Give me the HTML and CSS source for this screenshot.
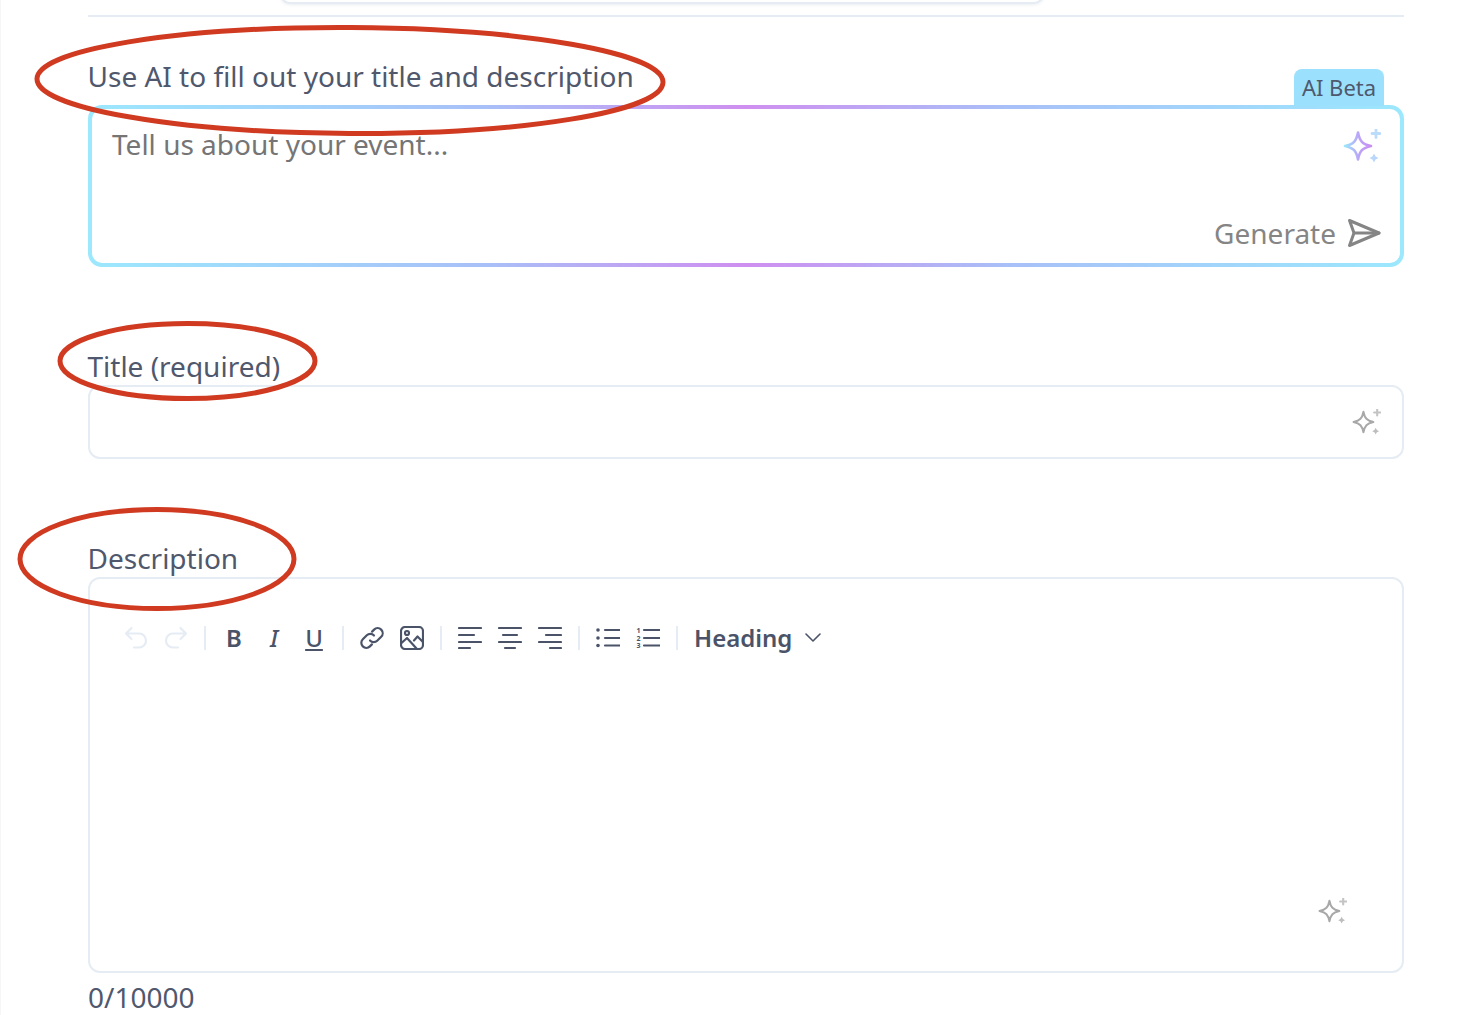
FILE: index.html
```html
<!DOCTYPE html>
<html lang="en">
<head>
<meta charset="utf-8">
<title>Event details</title>
<link rel="stylesheet" href="styles.css">
</head>
<body>
<svg width="0" height="0" class="defs">
  <defs>
    <linearGradient id="spark" x1="0" y1="0" x2="1" y2="0">
      <stop offset="0" stop-color="#9be6fb"/>
      <stop offset="0.5" stop-color="#b9a6f8"/>
      <stop offset="1" stop-color="#c98ef3"/>
    </linearGradient>
    <symbol id="sparkles" viewBox="0 0 38 36">
      <path d="M15 3.500c1.800 8.800 4.300 11.500 13 13.500-8.700 2-11.200 4.700-13 13.500C13.200 21.700 10.700 19 2 17c8.700-2 11.200-4.700 13-13.500z" fill="none" stroke-width="2.600" stroke-linejoin="round"/>
      <path class="spark-small" d="M33 0.500v8M29 4.500h8" fill="none" stroke-width="2.800" stroke-linecap="round"/>
      <path class="spark-fill" d="M31 24.500l1.600 2.900 2.900 1.600-2.900 1.600-1.600 2.900-1.600-2.900-2.900-1.600 2.900-1.600z"/>
    </symbol>
  </defs>
</svg>

<div class="popup-edge"></div>

<main class="page">
  <hr class="divider">

  <section class="ai-field">
    <div class="ai-head">
      <label class="label">Use AI to fill out your title and description</label>
      <span class="beta">AI Beta</span>
    </div>
    <div class="ai-box">
      <div class="ai-inner">
        <div class="placeholder">Tell us about your event...</div>
        <button class="generate" type="button">
          <span>Generate</span>
          <svg class="send" viewBox="0 0 34 30" fill="none" stroke="#858585" stroke-width="3" stroke-linejoin="round" stroke-linecap="round">
            <path d="M2.500 2.500L32 15 2.500 27.500 7 15z"/>
            <path d="M7 15h25"/>
          </svg>
        </button>
        <svg class="sparkle sparkle-ai"><use href="#sparkles"/></svg>
      </div>
    </div>
  </section>

  <section class="title-field">
    <label class="label">Title (required)</label>
    <div class="input">
      <svg class="sparkle sparkle-grey sparkle-title"><use href="#sparkles"/></svg>
    </div>
  </section>

  <section class="desc-field">
    <label class="label">Description</label>
    <div class="editor">
      <div class="toolbar">
        <svg class="ic ic-off" viewBox="0 0 24 24"><path d="M2 7.500h13a7 7 0 0 1 0 14h-5M2 7.500l5.500-5.500M2 7.500L7.500 13"/></svg>
        <svg class="ic ic-off" viewBox="0 0 24 24"><path d="M22 7.500H9a7 7 0 0 0 0 14h5M22 7.500L16.500 2M22 7.500L16.500 13"/></svg>
        <span class="sep"></span>
        <span class="glyph glyph-b">B</span>
        <span class="glyph glyph-i">I</span>
        <span class="glyph glyph-u">U</span>
        <span class="sep"></span>
        <svg class="ic" viewBox="0 0 24 24"><path d="M10 14.500a5 5 0 0 0 7.200.2l4-4a5 5 0 0 0-7.100-7.100l-2 2"/><path d="M14 9.500a5 5 0 0 0-7.200-.2l-4 4a5 5 0 0 0 7.100 7.100l2-2"/></svg>
        <svg class="ic" viewBox="0 0 24 24"><rect x="1" y="1" width="22" height="22" rx="4"/><circle cx="7" cy="7" r="2"/><path d="M1.500 17l5.500-5 9.500 10.500M14 14.500l3.500-4 5.500 5.500"/></svg>
        <span class="sep"></span>
        <svg class="ic ic-lines" viewBox="0 0 24 24"><path d="M1 2h22M1 9h15M1 16h22M1 22h11"/></svg>
        <svg class="ic ic-lines" viewBox="0 0 24 24"><path d="M1 2h22M5 9h14M1 16h22M7 22h10"/></svg>
        <svg class="ic ic-lines" viewBox="0 0 24 24"><path d="M1 2h22M8 9h15M1 16h22M12 22h11"/></svg>
        <span class="sep"></span>
        <svg class="ic" viewBox="0 0 24 24"><path d="M9 4h15M9 12h15M9 19.500h15"/><circle class="dot" cx="2" cy="4" r="1.800"/><circle class="dot" cx="2" cy="12" r="1.800"/><circle class="dot" cx="2" cy="19.500" r="1.800"/></svg>
        <svg class="ic" viewBox="0 0 24 24"><path d="M8 4h16M8 12h16M8 19.500h16"/><text class="num" x="0.500" y="6.500">1</text><text class="num" x="0.500" y="14.500">2</text><text class="num" x="0.500" y="22">3</text></svg>
        <span class="sep"></span>
        <button class="heading" type="button">
          <span>Heading</span>
          <svg class="chev" viewBox="0 0 16 10"><path d="M1 1l7 7 7-7"/></svg>
        </button>
      </div>
      <svg class="sparkle sparkle-grey sparkle-desc"><use href="#sparkles"/></svg>
    </div>
    <div class="count">0/10000</div>
  </section>
</main>

<svg class="marks" viewBox="0 0 1459 1015" fill="none" stroke="#cf3a20" stroke-width="5">
  <ellipse cx="350" cy="80.500" rx="313" ry="53" transform="rotate(0.300 350 80.500)"/>
  <ellipse cx="187.500" cy="361" rx="127.500" ry="37.500"/>
  <ellipse cx="157" cy="559" rx="137" ry="49.500"/>
</svg>
</body>
</html>
```

FILE: styles.css
```css
* { box-sizing: border-box; }

html, body { margin: 0; padding: 0; }

body {
  position: relative;
  width: 1459px;
  height: 1015px;
  overflow: hidden;
  background: #fff;
  box-shadow: inset 1px 0 0 #f6f6f6;
  font-family: "Noto Sans", "Liberation Sans", sans-serif;
  color: #4f586d;
}

.defs { position: absolute; }

.popup-edge {
  position: absolute;
  left: 280px;
  top: -20px;
  width: 764px;
  height: 24px;
  background: #fff;
  border: 2px solid #e6ecf3;
  border-radius: 10px;
  box-shadow: 0 1px 3px rgba(90, 110, 140, .12);
}

.page { padding: 15px 55px 0 88px; }

.divider {
  margin: 0;
  height: 2px;
  border: 0;
  background: #e6ecf3;
}

.label {
  display: block;
  margin-left: -0.5px;
  font-size: 28px;
  line-height: 38px;
  color: #4f586d;
}

.ai-field { margin-top: 40px; }

.ai-head {
  display: flex;
  justify-content: space-between;
  align-items: flex-end;
  height: 48px;
  padding-right: 20px;
}

.ai-head .label { align-self: flex-start; }

.beta {
  width: 90px;
  height: 37px;
  margin-bottom: -1px;
  background: #9be1fd;
  border-radius: 8px 8px 0 0;
  font-size: 22px;
  line-height: 36px;
  text-align: center;
  color: #4f586d;
}

.ai-box {
  height: 162px;
  padding: 4px;
  border-radius: 14px;
  background: linear-gradient(90deg, #9ce8fd 0%, #a8c0f8 30%, #cf8ff0 50%, #a8c0f8 70%, #9ce8fd 100%);
}

.ai-inner {
  position: relative;
  display: flex;
  flex-direction: column;
  justify-content: space-between;
  height: 100%;
  padding: 16px 19px 11px 20px;
  background: #fff;
  border-radius: 10px;
}

.placeholder {
  font-size: 28px;
  line-height: 38px;
  color: #757575;
}

.generate {
  display: flex;
  align-items: center;
  gap: 11px;
  align-self: flex-end;
  padding: 0;
  border: 0;
  background: none;
  font: inherit;
  font-size: 28px;
  line-height: 38px;
  color: #858585;
}

.send { width: 34px; height: 30px; }

.sparkle {
  position: absolute;
  --small: #bcdcfb;
  --tiny: #b9d6fb;
}

.spark-fill { fill: var(--tiny); stroke: none; }

.spark-small { stroke: var(--small); }

.sparkle-ai {
  top: 20px;
  right: 19px;
  width: 38px;
  height: 36px;
  stroke: url(#spark);
  fill: none;
}

.sparkle-grey {
  width: 29px;
  height: 27.5px;
  stroke: #a8a8a8;
  --small: #c4c4c4;
  --tiny: #bdbdbd;
}

.sparkle-title { top: 22px; right: 21px; }

.sparkle-desc { bottom: 45.5px; right: 55.5px; }

.title-field { margin-top: 80px; }

.input {
  position: relative;
  height: 74px;
  border: 2px solid #e6ecf3;
  border-radius: 12px;
}

.desc-field { margin-top: 80px; }

.editor {
  position: relative;
  height: 396px;
  border: 2px solid #e6ecf3;
  border-radius: 12px;
  padding: 47px 0 0 34px;
}

.toolbar {
  display: flex;
  align-items: center;
  gap: 16px;
  height: 24px;
}

.ic {
  flex: none;
  width: 24px;
  height: 24px;
  fill: none;
  stroke: #4a5368;
  stroke-width: 2.200;
  stroke-linecap: round;
  stroke-linejoin: round;
}

.ic-off { stroke: #e6ecf3; }

.dot { fill: #4a5368; stroke: none; }

.num {
  fill: #4a5368;
  stroke: none;
  font-family: "Noto Sans", sans-serif;
  font-size: 7px;
  font-weight: 700;
}

.sep {
  flex: none;
  width: 2px;
  height: 24px;
  background: #e6ecf3;
}

.glyph {
  flex: none;
  width: 24px;
  height: 24px;
  font-size: 24px;
  line-height: 24px;
  text-align: center;
  color: #4a5368;
}

.glyph-b { font-weight: 600; }

.glyph-i { font-style: italic; font-weight: 500; }

.glyph-u {
  font-weight: 500;
  text-decoration: underline;
  text-decoration-thickness: 2px;
  text-underline-offset: 2px;
}

.heading {
  display: flex;
  align-items: center;
  gap: 13px;
  padding: 0 0 2px;
  border: 0;
  background: none;
  font: inherit;
  font-size: 24px;
  font-weight: 600;
  color: #4a5368;
}

.chev {
  width: 16px;
  height: 10px;
  margin-top: 2px;
  fill: none;
  stroke: #4a5368;
  stroke-width: 1.600;
  stroke-linecap: round;
  stroke-linejoin: round;
}

.count {
  font-size: 28px;
  line-height: 30px;
  margin-top: 9px;
  color: #4f586d;
}

.marks {
  position: absolute;
  left: 0;
  top: 0;
  width: 1459px;
  height: 1015px;
  pointer-events: none;
}
```
